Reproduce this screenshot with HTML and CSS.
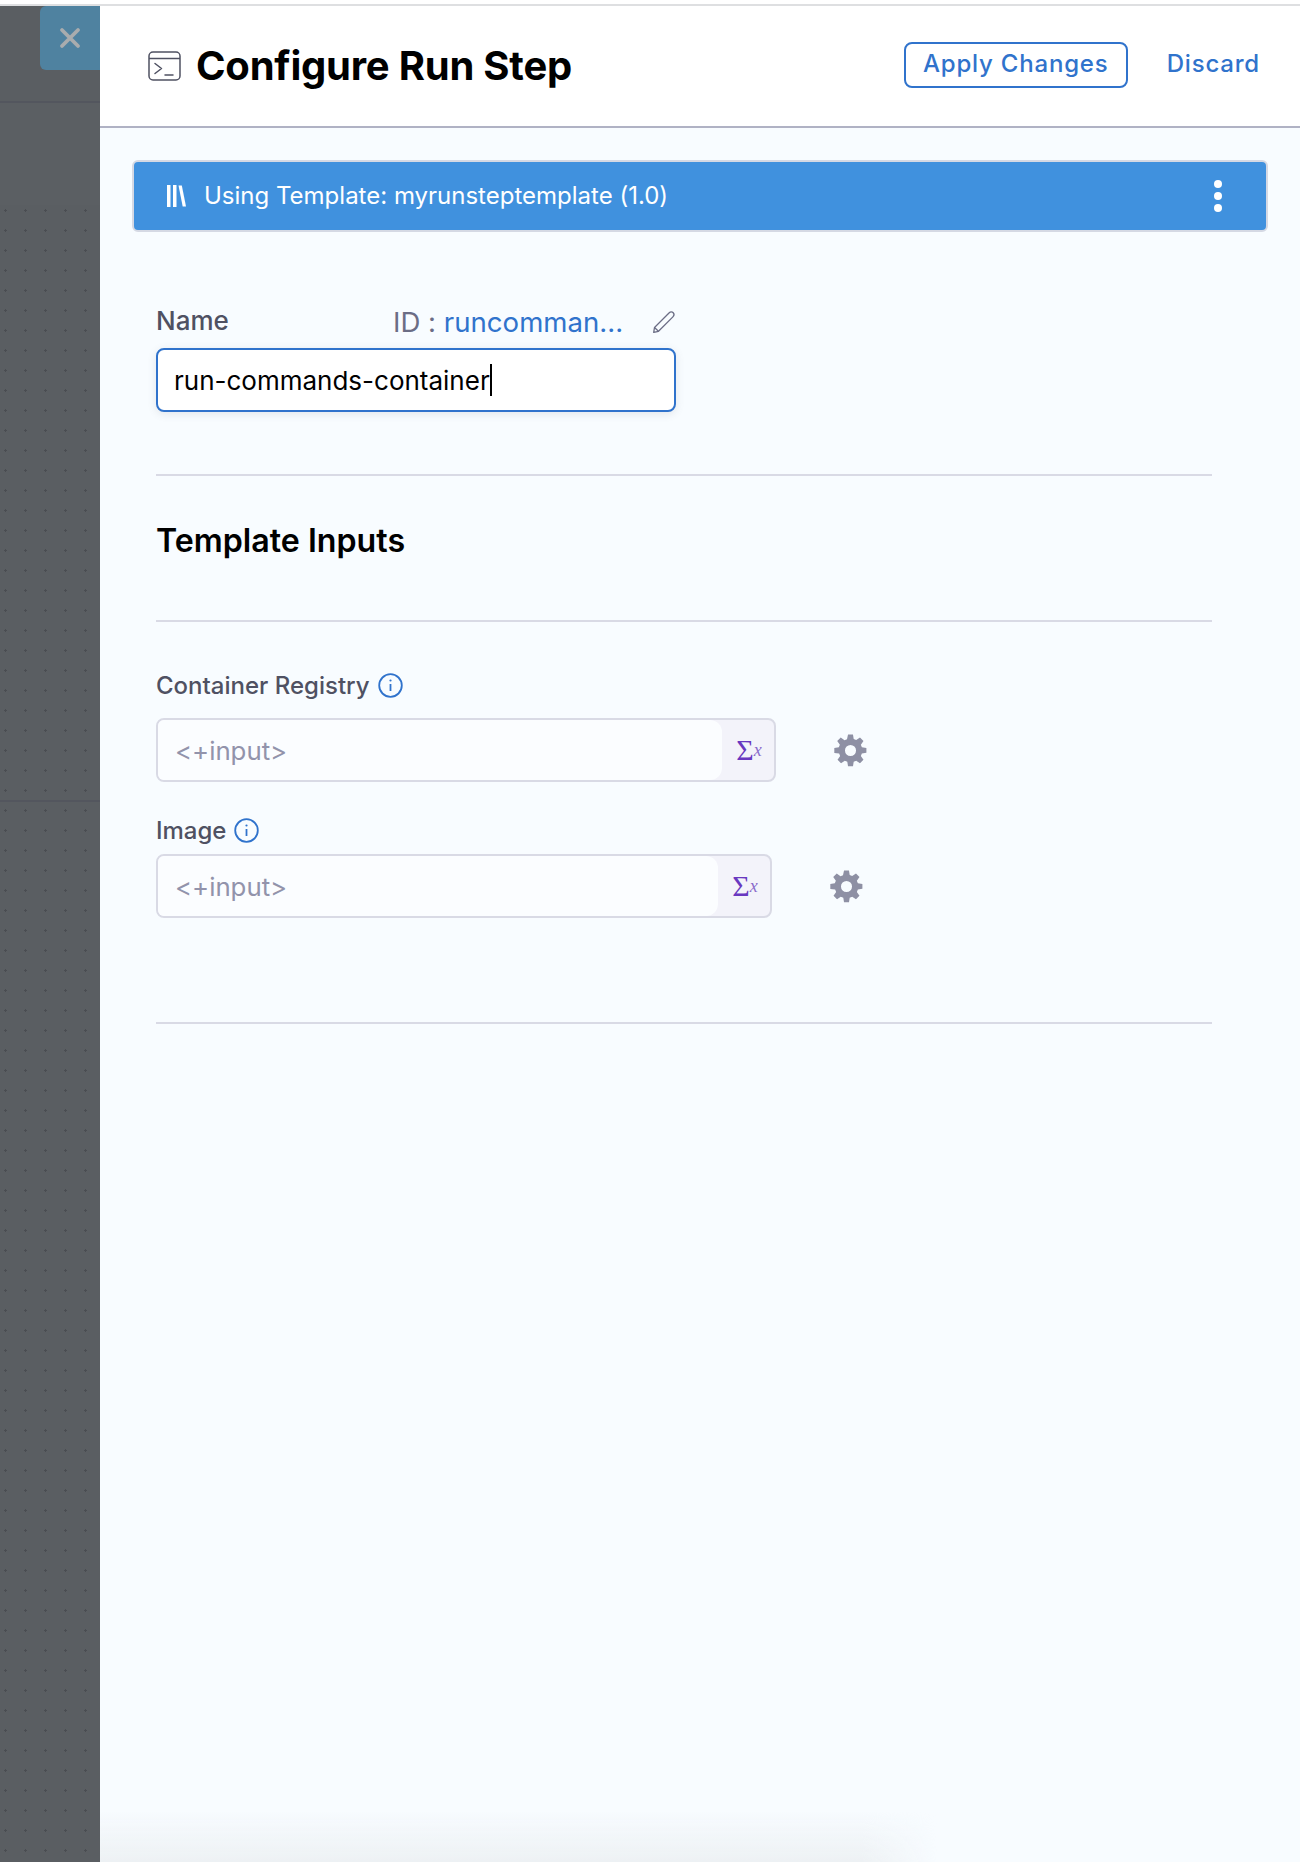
FILE: index.html
```html
<!DOCTYPE html>
<html lang="en">
<head>
<meta charset="utf-8">
<title>Configure Run Step</title>
<link rel="stylesheet" href="styles.css">
</head>
<body>
<div class="topline"></div>
<div class="app">
  <aside class="backdrop">
    <div class="bd-head"></div>
    <div class="bd-plain"></div>
    <div class="bd-dots bd-dots-a"></div>
    <div class="bd-dots bd-dots-b"></div>
  </aside>
  <button class="close" aria-label="Close">
    <svg width="24" height="24" viewBox="0 0 24 24"><path d="M4 4l16 16M20 4L4 20" stroke="#a9acae" stroke-width="3.800" stroke-linecap="round" fill="none"/></svg>
  </button>
  <main class="drawer">
    <header class="head">
      <svg class="term" width="33" height="30" viewBox="0 0 33 30" fill="none" stroke="#4f5162" stroke-width="1.5"><rect x="1" y="1" width="31" height="28" rx="4"/><path d="M1 7.5h31"/><path d="M7 12.5l6.500 5-6.500 5M17 24h8" stroke-linecap="round" stroke-linejoin="round"/></svg>
      <h1 class="title">Configure Run Step</h1>
      <div class="actions">
        <button class="apply">Apply Changes</button>
        <button class="discard">Discard</button>
      </div>
    </header>
    <section class="body">
      <div class="banner">
        <svg class="lib" width="20" height="22" viewBox="0 0 20 22" fill="#fff"><rect x="1" y="0" width="3.500" height="22"/><rect x="7" y="0" width="3.500" height="22"/><path d="M12.500 0.500h3.300l4.200 21h-3.300z"/></svg>
        <span class="banner-text">Using Template: myrunsteptemplate (1.0)</span>
        <span class="kebab"><i></i><i></i><i></i></span>
      </div>
      <div class="form">
        <div class="name-row">
          <span class="label">Name</span>
          <span class="id"><span class="id-key">ID :</span> <span class="id-val">runcomman...</span></span>
          <svg class="pencil" width="24" height="24" viewBox="0 0 24 24" fill="none" stroke="#6b6d85" stroke-width="1.300" stroke-linejoin="round"><path d="M2.500 17.500L17 3c1.500-1.400 3.200-1.300 4.200-.2s1 2.800-.3 4.100L6.500 21.300l-4.800 1z"/><path d="M2.500 17.500l4 3.800"/></svg>
        </div>
        <div class="name-input"><span>run-commands-container</span><i class="caret"></i></div>
        <hr class="rule rule-a">
        <h2 class="sub">Template Inputs</h2>
        <hr class="rule rule-b">
        <div class="field field-a">
          <div class="field-label">Container Registry <svg class="info" width="25" height="25" viewBox="0 0 25 25" fill="none" stroke="#3073cc"><circle cx="12.500" cy="12.500" r="11.300" stroke-width="1.800"/><path d="M12.500 11v7" stroke-width="1.800"/><circle cx="12.500" cy="7.500" r="1.100" fill="#3073cc" stroke="none"/></svg></div>
          <div class="line">
            <div class="runtime">
              <span class="ph">&lt;+input&gt;</span>
              <span class="fx"><span class="sigma">Σ</span><span class="x">x</span></span>
            </div>
            <svg class="gear" width="35" height="35" viewBox="0 0 24 24" fill="#8e90a4"><path d="M10.300 1h3.400l.5 3.100 1.700.7 2.600-1.800 2.400 2.400-1.800 2.600.7 1.700 3.100.5v3.400l-3.100.5-.7 1.700 1.800 2.600-2.400 2.400-2.600-1.800-1.700.7-.5 3.100h-3.400l-.5-3.100-1.700-.7-2.600 1.800-2.400-2.400 1.800-2.600-.7-1.700L.9 13.700v-3.400l3.100-.5.700-1.700-1.800-2.600 2.400-2.400 2.600 1.800 1.700-.7zM12 8.200a3.800 3.800 0 100 7.600 3.800 3.800 0 000-7.600z" fill-rule="evenodd"/></svg>
          </div>
        </div>
        <div class="field field-b">
          <div class="field-label">Image <svg class="info" width="25" height="25" viewBox="0 0 25 25" fill="none" stroke="#3073cc"><circle cx="12.500" cy="12.500" r="11.300" stroke-width="1.800"/><path d="M12.500 11v7" stroke-width="1.800"/><circle cx="12.500" cy="7.500" r="1.100" fill="#3073cc" stroke="none"/></svg></div>
          <div class="line line-b">
            <div class="runtime">
              <span class="ph">&lt;+input&gt;</span>
              <span class="fx"><span class="sigma">Σ</span><span class="x">x</span></span>
            </div>
            <svg class="gear" width="35" height="35" viewBox="0 0 24 24" fill="#8e90a4"><path d="M10.300 1h3.400l.5 3.100 1.700.7 2.600-1.800 2.400 2.400-1.800 2.600.7 1.700 3.100.5v3.400l-3.100.5-.7 1.700 1.800 2.600-2.400 2.400-2.600-1.800-1.700.7-.5 3.100h-3.400l-.5-3.100-1.700-.7-2.600 1.800-2.400-2.400 1.800-2.600-.7-1.700L.9 13.700v-3.400l3.100-.5.700-1.700-1.800-2.600 2.400-2.400 2.600 1.800 1.700-.7zM12 8.200a3.800 3.800 0 100 7.600 3.800 3.800 0 000-7.600z" fill-rule="evenodd"/></svg>
          </div>
        </div>
        <hr class="rule rule-c">
      </div>
      <div class="foot-shade"></div>
    </section>
  </main>
</div>
</body>
</html>
```
FILE: styles.css
```css
* { box-sizing: border-box; }
html, body { margin: 0; height: 100%; }
body { background: #fff; font-family: Inter, "Noto Sans", sans-serif; overflow: hidden; font-feature-settings: "calt" 0; }
.topline { height: 6px; background: #fff; border-bottom: 2px solid #dedfe1; }
.app { position: relative; display: flex; height: 1856px; }

.backdrop { width: 100px; flex: none; background: #5a5e62; display: flex; flex-direction: column; }
.bd-head { height: 97px; border-bottom: 2px solid #53565e; }
.bd-plain { height: 102px; background: #5b5f63; }
.bd-dots { background-color: #5a5e62; background-size: 20px 20px; background-image: radial-gradient(circle at 5.500px 5.500px, #4a4d52 1.200px, transparent 1.400px); }
.bd-dots-a { height: 597px; border-bottom: 2px solid #53565e; }
.bd-dots-b { flex: 1; background-position: 0 3px; }

.close { position: absolute; left: 40px; top: 0; width: 60px; height: 64px; border: 0; padding: 0; background: #4f82a0; border-radius: 6px 0 0 6px; display: flex; align-items: center; justify-content: center; }

.drawer { flex: 1; display: flex; flex-direction: column; min-width: 0; }
.head { height: 122px; flex: none; background: #fff; border-bottom: 2px solid #b0b2c4; display: flex; align-items: center; padding: 0 40px 0 48px; }
.term { flex: none; margin-right: 15px; margin-top: -1px; }
.title { margin: 0; font-size: 40px; line-height: 46px; font-weight: 700; color: #000; letter-spacing: -0.220px; flex: 1; }
.actions { display: flex; align-items: center; gap: 39px; margin-top: -3px; }
.apply { width: 224px; height: 46px; border: 2px solid #3073cc; border-radius: 8px; background: #fff; color: #3073cc; font: 500 24px Inter, sans-serif; letter-spacing: 0.800px; padding: 0 0 2px; }
.discard { border: 0; padding: 0 0 2px; background: none; color: #3073cc; font: 500 24px Inter, sans-serif; letter-spacing: 0.800px; }

.body { flex: 1; position: relative; background: #f8fcff; padding: 32px 32px 0; }
.banner { height: 72px; background: #4091de; border: 2px solid #d5d9e4; border-radius: 6px; display: flex; align-items: center; padding: 0 44px 0 32px; color: #fff; }
.lib { flex: none; margin-right: 18px; }
.banner-text { flex: 1; font-size: 24px; padding-bottom: 2px; }
.kebab { display: flex; flex-direction: column; gap: 4px; }
.kebab i { width: 8px; height: 8px; border-radius: 50%; background: #fff; display: block; }

.form { width: 1056px; margin-left: 24px; }
.name-row { display: flex; align-items: center; height: 32px; margin-top: 74px; width: 520px; }
.label { width: 237px; padding-bottom: 4px; font-size: 26px; font-weight: 500; color: #4f5162; }
.id { font-size: 27.600px; white-space: nowrap; flex: 1; }
.id-key { color: #6b6d85; }
.id-val { color: #3073cc; }
.pencil { flex: none; }
.name-input { width: 520px; height: 64px; margin-top: 10px; border: 2px solid #3073cc; border-radius: 8px; background: #fff; display: flex; align-items: center; padding: 0 0 0 16px; font-size: 26px; color: #000; box-shadow: 0 2px 8px rgba(96, 97, 112, 0.14); }
.caret { width: 2px; height: 32px; background: #000; }
.rule { border: 0; height: 2px; background: #d9dae5; margin: 0; }
.rule-a { margin-top: 62px; }
.sub { margin: 45px 0 0; font-size: 32.200px; line-height: 40px; font-weight: 600; color: #000; }
.rule-b { margin-top: 59px; }
.field-a { margin-top: 47px; }
.field-label { display: flex; align-items: center; gap: 8px; height: 32px; font-size: 24px; font-weight: 500; color: #4f5162; }
.info { flex: none; }
.line { display: flex; align-items: center; gap: 57px; margin-top: 17px; }
.line-b { margin-top: 8px; }
.field-b { margin-top: 32px; }
.field-b .runtime { width: 616px; }
.runtime { width: 620px; height: 64px; border: 2px solid #d9dae5; border-radius: 8px; background: #f3f3fa; display: flex; align-items: stretch; overflow: hidden; }
.ph { flex: 1; display: flex; align-items: center; padding-left: 17px; font-size: 25.800px; color: #9293ab; background: #fbfdff; border-radius: 0 12px 12px 0; }
.fx { flex: none; width: 52px; padding-left: 2px; display: flex; align-items: center; justify-content: center; color: #6938c0; font-family: "Liberation Serif", serif; }
.sigma { font-size: 30px; line-height: 1; }
.x { font-size: 18px; font-style: italic; color: #8a6ccb; }
.gear { flex: none; }
.rule-c { margin-top: 104px; }
.foot-shade { position: absolute; left: 0; bottom: 0; width: 837px; height: 52px; background: linear-gradient(to bottom, rgba(237, 241, 244, 0), #edf1f4); -webkit-mask-image: linear-gradient(to right, #000 91%, transparent); mask-image: linear-gradient(to right, #000 91%, transparent); }
```
